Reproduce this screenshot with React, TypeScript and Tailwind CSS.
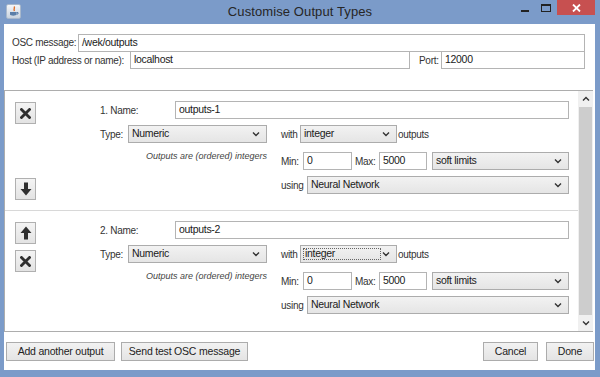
const font = { fontFamily: '"Liberation Sans", Arial, sans-serif' };

function Field({ value, className = '' }: { value: string; className?: string }) {
  return (
    <div className={`flex h-[18px] items-center border border-[#b4b4b4] bg-white pl-[3px] text-[10.5px] text-[#1a1a1a] ${className}`}>
      {value}
    </div>
  );
}

function Chevron() {
  return (
    <svg width="8" height="6" viewBox="0 0 8 6" className="shrink-0">
      <path d="M1 1.5 L4 4.5 L7 1.5" fill="none" stroke="#333" strokeWidth="1.4" />
    </svg>
  );
}

function Select({ value, className = '', focused = false }: { value: string; className?: string; focused?: boolean }) {
  return (
    <div className={`flex h-[18px] items-center justify-between border border-[#acacac] bg-[linear-gradient(180deg,#f2f2f2,#e5e5e5)] pl-[2px] pr-[6px] text-[10.5px] text-[#1a1a1a] ${className}`}>
      {focused ? (
        <span className="flex h-[12px] w-[78px] items-center border border-dotted border-[#666] pl-[1px]">{value}</span>
      ) : (
        <span className="pl-[1px]">{value}</span>
      )}
      <Chevron />
    </div>
  );
}

function IconButton({ kind }: { kind: 'x' | 'up' | 'down' }) {
  return (
    <div className="flex h-[22px] w-[21px] items-center justify-center border border-[#b0b0b0] bg-[linear-gradient(180deg,#f4f4f4,#e3e3e3)]">
      {kind === 'x' ? (
        <svg width="11" height="11" viewBox="0 0 11 11">
          <path d="M1.5 1.5 L9.5 9.5 M9.5 1.5 L1.5 9.5" stroke="#2f2f2f" strokeWidth="2.8" strokeLinecap="square" />
        </svg>
      ) : (
        <svg width="12" height="14" viewBox="0 0 12 14" className={kind === 'down' ? 'rotate-180' : ''}>
          <path d="M6 0.5 L11.5 7 L8 7 L8 13.5 L4 13.5 L4 7 L0.5 7 Z" fill="#2f2f2f" />
        </svg>
      )}
    </div>
  );
}

function OutputItem({ index, name, first }: { index: number; name: string; first: boolean }) {
  return (
    <div className={`flex h-[120px] shrink-0 ${first ? 'border-b border-[#d8d8d8]' : ''}`}>
      <div className={`flex w-[95px] flex-col pl-[10px] pt-[11px] ${first ? 'justify-between pb-[10px]' : 'gap-[6px]'}`}>
        {first ? (
          <>
            <IconButton kind="x" />
            <IconButton kind="down" />
          </>
        ) : (
          <>
            <IconButton kind="up" />
            <IconButton kind="x" />
          </>
        )}
      </div>
      <div className="flex flex-1 flex-col whitespace-nowrap pr-[9px] pt-[10px] text-[10px] tracking-[-0.3px] text-[#333]">
        <div className="flex items-center">
          <span className="w-[75px] shrink-0">{index}. Name:</span>
          <Field value={name} className="flex-1" />
        </div>
        <div className="mt-[6px] flex gap-[14px]">
          <div className="flex w-[167px] shrink-0 flex-col">
            <div className="flex items-center">
              <span className="w-[28px] shrink-0">Type:</span>
              <Select value="Numeric" className="flex-1" />
            </div>
            <span className="mt-[7px] self-end text-[9px] italic tracking-[0px] text-[#444]">Outputs are (ordered) integers</span>
          </div>
          <div className="flex flex-1 flex-col">
            <div className="flex items-center">
              <span className="w-[19px] shrink-0">with</span>
              <Select value="integer" className="w-[97px]" focused={!first} />
              <span className="ml-[1px]">outputs</span>
            </div>
            <div className="mt-[9px] flex items-center">
              <span className="w-[22px] shrink-0">Min:</span>
              <Field value="0" className="w-[49px]" />
              <span className="ml-[3px] w-[24px] shrink-0">Max:</span>
              <Field value="5000" className="w-[48px]" />
              <Select value="soft limits" className="ml-[5px] flex-1" />
            </div>
            <div className="mt-[6px] flex items-center">
              <span className="w-[26px] shrink-0">using</span>
              <Select value="Neural Network" className="flex-1" />
            </div>
          </div>
        </div>
      </div>
    </div>
  );
}

function Button({ label, className = '' }: { label: string; className?: string }) {
  return (
    <div className={`flex h-[19px] items-center justify-center whitespace-nowrap border border-[#acacac] bg-[linear-gradient(180deg,#f2f2f2,#e4e4e4)] text-[10.5px] tracking-[-0.2px] text-[#222] ${className}`}>
      {label}
    </div>
  );
}

export default function App() {
  return (
    <div className="flex h-[377px] w-[600px] flex-col overflow-hidden bg-[#7b9bc9]" style={font}>
      <div className="relative flex h-[24px] shrink-0 items-center justify-center">
        <div className="absolute left-[6px] top-[4px] flex h-[15px] w-[15px] items-center justify-center rounded-[2px] border border-[#a8b8cc] bg-[linear-gradient(180deg,#f4f6f9,#c9d3df)]">
          <svg width="11" height="11" viewBox="0 0 11 11">
            <path d="M6 0.5 C7.5 2 5 3 6.5 5" stroke="#e0702a" strokeWidth="1.4" fill="none" />
            <path d="M2 6 H8.5 V8.5 C8.5 10 2 10 2 8.5 Z" fill="#5a7ea8" />
            <path d="M8.5 6.5 H10 V8 H8.5" stroke="#5a7ea8" fill="none" />
          </svg>
        </div>
        <span className="text-[13px] tracking-[0.1px] text-[#262626]">Customise Output Types</span>
        <div className="absolute right-[71px] top-[10px] h-[2px] w-[8px] bg-[#222]" />
        <div className="absolute right-[49px] top-[4px] h-[8px] w-[10px] border border-t-2 border-[#222]" />
        <div className="absolute right-[5px] top-0 flex h-[15px] w-[38px] items-center justify-center bg-[#c75050]">
          <svg width="9" height="8" viewBox="0 0 9 8">
            <path d="M1 0.5 L8 7.5 M8 0.5 L1 7.5" stroke="#fff" strokeWidth="1.8" />
          </svg>
        </div>
      </div>

      <div className="ml-[4px] mr-[5px] flex h-[346px] shrink-0 flex-col bg-white text-[10px] tracking-[-0.3px] text-[#333]">
        <div className="flex flex-col whitespace-nowrap pl-[8px] pr-[10px] pt-[10px]">
          <div className="flex h-[17px] items-center">
            <span className="w-[66px] shrink-0">OSC message:</span>
            <Field value="/wek/outputs" className="h-[17px] flex-1" />
          </div>
          <div className="flex items-center">
            <span className="w-[118px] shrink-0">Host (IP address or name):</span>
            <Field value="localhost" className="w-[280px]" />
            <span className="ml-[9px] w-[22px] shrink-0">Port:</span>
            <Field value="12000" className="flex-1" />
          </div>
        </div>

        <div className="mr-[2px] mt-[21px] flex h-[242px] shrink-0 overflow-hidden border border-r-0 border-[#adadad]">
          <div className="flex flex-1 flex-col">
            <OutputItem index={1} name="outputs-1" first />
            <OutputItem index={2} name="outputs-2" first={false} />
          </div>
          <div className="flex w-[15px] flex-col bg-[#f0f0f0]">
            <div className="flex h-[16px] items-center justify-center">
              <svg width="8" height="6" viewBox="0 0 8 6">
                <path d="M1 4.5 L4 1.5 L7 4.5" fill="none" stroke="#333" strokeWidth="1.4" />
              </svg>
            </div>
            <div className="mx-[1px] flex-1 bg-[#cdcdcd]" />
            <div className="flex h-[16px] items-center justify-center">
              <Chevron />
            </div>
          </div>
        </div>

        <div className="flex items-center pl-[2px] pr-[1px] pt-[10px]">
          <Button label="Add another output" className="w-[109px]" />
          <Button label="Send test OSC message" className="ml-[6px] w-[127px]" />
          <div className="flex-1" />
          <Button label="Cancel" className="w-[55px]" />
          <Button label="Done" className="ml-[8px] w-[48px]" />
        </div>
      </div>
    </div>
  );
}
